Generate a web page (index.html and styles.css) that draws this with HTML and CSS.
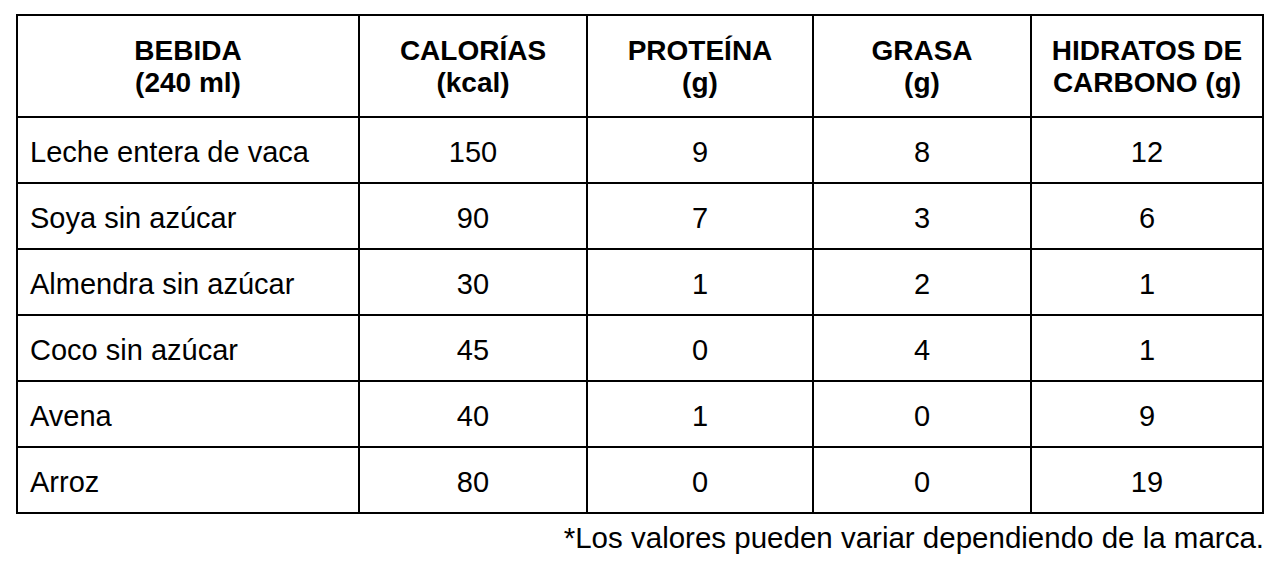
FILE: index.html
```html
<!DOCTYPE html>
<html lang="es">
<head>
<meta charset="utf-8">
<title>Bebidas</title>
<link rel="stylesheet" href="styles.css">
</head>
<body>
<div class="wrap">
  <table class="nutri">
    <colgroup>
      <col class="c1"><col class="c2"><col class="c3"><col class="c4"><col class="c5">
    </colgroup>
    <thead>
      <tr>
        <th>BEBIDA<br>(240 ml)</th>
        <th>CALORÍAS<br>(kcal)</th>
        <th>PROTEÍNA<br>(g)</th>
        <th>GRASA<br>(g)</th>
        <th>HIDRATOS DE<br>CARBONO (g)</th>
      </tr>
    </thead>
    <tbody>
      <tr><td class="name">Leche entera de vaca</td><td>150</td><td>9</td><td>8</td><td>12</td></tr>
      <tr><td class="name">Soya sin azúcar</td><td>90</td><td>7</td><td>3</td><td>6</td></tr>
      <tr><td class="name">Almendra sin azúcar</td><td>30</td><td>1</td><td>2</td><td>1</td></tr>
      <tr><td class="name">Coco sin azúcar</td><td>45</td><td>0</td><td>4</td><td>1</td></tr>
      <tr><td class="name">Avena</td><td>40</td><td>1</td><td>0</td><td>9</td></tr>
      <tr><td class="name">Arroz</td><td>80</td><td>0</td><td>0</td><td>19</td></tr>
    </tbody>
  </table>
  <p class="note">*Los valores pueden variar dependiendo de la marca.</p>
</div>
</body>
</html>
```
FILE: styles.css
```css
html, body {
  margin: 0;
  padding: 0;
  background: #ffffff;
}
body {
  font-family: "Liberation Sans", Arial, sans-serif;
  color: #000000;
  font-size: 29px;
}
.wrap {
  padding: 14px 0 0 16px;
  width: 1248px;
}
.nutri {
  border-collapse: collapse;
  table-layout: fixed;
  width: 1248px;
}
.c1 { width: 342px; }
.c2 { width: 228px; }
.c3 { width: 226px; }
.c4 { width: 218px; }
.c5 { width: 232px; }
.nutri th,
.nutri td {
  border: 2px solid #000000;
  text-align: center;
  vertical-align: middle;
  padding: 0 8px;
  line-height: 32px;
}
.nutri thead tr { height: 102px; }
.nutri tbody tr { height: 66px; }
.nutri th {
  font-weight: bold;
  font-size: 28px;
  padding-top: 1px;
}
.nutri td {
  padding-top: 3px;
}
.nutri td.name {
  text-align: left;
  padding-left: 12px;
}
.note {
  margin: 6px 0 0 0;
  text-align: right;
  font-size: 29.5px;
  line-height: 36px;
}
```
